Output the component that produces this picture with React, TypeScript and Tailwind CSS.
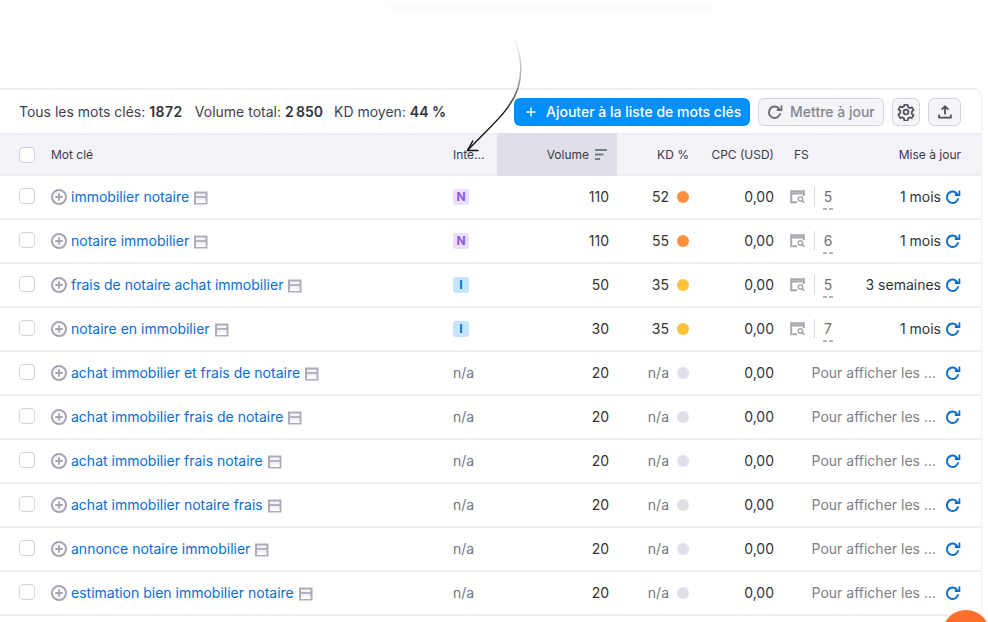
import React from "react";
import { Plus } from "lucide-react";

type Row = {
  keyword: string;
  intent?: "N" | "I";
  volume: number;
  kd?: number;
  fs?: number;
  updated?: string;
};

const rows: Row[] = [
  { keyword: "immobilier notaire", intent: "N", volume: 110, kd: 52, fs: 5, updated: "1 mois" },
  { keyword: "notaire immobilier", intent: "N", volume: 110, kd: 55, fs: 6, updated: "1 mois" },
  { keyword: "frais de notaire achat immobilier", intent: "I", volume: 50, kd: 35, fs: 5, updated: "3 semaines" },
  { keyword: "notaire en immobilier", intent: "I", volume: 30, kd: 35, fs: 7, updated: "1 mois" },
  { keyword: "achat immobilier et frais de notaire", volume: 20 },
  { keyword: "achat immobilier frais de notaire", volume: 20 },
  { keyword: "achat immobilier frais notaire", volume: 20 },
  { keyword: "achat immobilier notaire frais", volume: 20 },
  { keyword: "annonce notaire immobilier", volume: 20 },
  { keyword: "estimation bien immobilier notaire", volume: 20 },
];

const Checkbox = () => (
  <span className="block h-4 w-4 rounded-[4px] border border-[#d3d3da] bg-white" />
);

const AddIcon = () => (
  <svg width="16" height="16" viewBox="0 0 16 16" fill="none" className="shrink-0">
    <circle cx="8" cy="8" r="7" stroke="#a4a4b2" strokeWidth="2" />
    <path d="M8 4.2v7.6M4.2 8h7.6" stroke="#a4a4b2" strokeWidth="1.8" />
  </svg>
);

const SerpIcon = () => (
  <svg width="14" height="14" viewBox="0 0 14 14" fill="none" className="mt-px shrink-0">
    <rect x="1" y="1.5" width="11.5" height="11" fill="#f3f3f6" stroke="#adadba" strokeWidth="2" />
    <path d="M1 6h11.5" stroke="#adadba" strokeWidth="1.8" />
    <path d="M2 9.5h9.5V12H2z" fill="#ffffff" />
  </svg>
);

const SerpSearchIcon = () => (
  <svg width="16" height="14" viewBox="0 0 16 14" fill="none" className="shrink-0">
    <path d="M7 12.2H1.2V1.2h12.6V6" stroke="#a8a8b0" strokeWidth="2" />
    <path d="M1.2 3.4h12.6" stroke="#a8a8b0" strokeWidth="2.2" />
    <circle cx="10.5" cy="9" r="2.2" stroke="#a8a8b0" strokeWidth="1.5" />
    <path d="M12.2 10.7l2 2" stroke="#a8a8b0" strokeWidth="1.7" />
  </svg>
);

const RefreshIcon = ({ color }: { color: string }) => (
  <svg width="16" height="16" viewBox="0 0 16 16" fill="none" stroke={color} strokeWidth="2" className="shrink-0">
    <path d="M12.4 5.2A5.7 5.7 0 1 0 13.2 9.4" />
    <path d="M14.4 1.4V6H9.8" strokeWidth="1.8" />
  </svg>
);

const GearIcon = () => (
  <svg width="18" height="18" viewBox="0 0 24 24" fill="none" stroke="#55555f" strokeWidth="2.4" strokeLinejoin="round">
    <path d="M9.8 2.5h4.4l.6 3 2.1 1.2 2.9-1 2.2 3.8-2.3 2v2.9l2.3 2-2.2 3.8-2.9-1-2.1 1.2-.6 3H9.8l-.6-3-2.1-1.2-2.9 1L2 15.4l2.3-2v-2.9L2 8.5l2.2-3.8 2.9 1 2.1-1.2z" />
    <circle cx="12" cy="12" r="3.2" />
  </svg>
);

const UploadIcon = () => (
  <svg width="16" height="16" viewBox="0 0 16 16" fill="none" stroke="#4f4f58" strokeWidth="1.8">
    <path d="M8 10.5V2.6" />
    <path d="M4.6 5.6L8 2.2l3.4 3.4" />
    <path d="M2.2 10.6v3h11.6v-3" />
  </svg>
);

const SortIcon = () => (
  <svg width="12" height="11" viewBox="0 0 12 11" className="shrink-0">
    <path d="M0 0h12v2H0z" fill="#6f7f88" />
    <path d="M0 4.5h8.5v2H0z" fill="#6f7f88" />
    <path d="M0 9h5v2H0z" fill="#6f7f88" />
  </svg>
);

const dotColor = (kd?: number) => {
  if (!kd) return "bg-[#e0dfe8]";
  return kd >= 50 ? "bg-[#ff9040]" : "bg-[#ffc238]";
};

const KeywordRow = ({ row }: { row: Row }) => (
  <div className="flex h-11 items-center border-b-2 border-[#f0eff5] bg-white text-sm text-[#333339]">
    <div className="w-[51px] pl-[19px] pb-[2px]">
      <Checkbox />
    </div>
    <div className="flex w-[402px] items-center">
      <AddIcon />
      <span className="ml-1 text-[#0a6ecf]">{row.keyword}</span>
      <span className="ml-[5px]">
        <SerpIcon />
      </span>
    </div>
    <div className="w-[44px]">
      {row.intent === "N" && (
        <span className="flex h-4 w-4 items-center justify-center rounded-[3px] bg-[#eadffd] text-xs font-bold text-[#8c55ea]">N</span>
      )}
      {row.intent === "I" && (
        <span className="flex h-4 w-4 items-center justify-center rounded-[3px] bg-[#c4e5fb] text-xs font-bold text-[#0a6ecf]">I</span>
      )}
      {!row.intent && <span className="text-[#75757f]">n/a</span>}
    </div>
    <div className="w-[120px] pr-[8px] text-right">{row.volume}</div>
    <div className="flex w-[72px] items-center justify-end gap-2">
      <span className={row.kd ? "" : "text-[#75757f]"}>{row.kd ?? "n/a"}</span>
      <span className={`h-3 w-3 rounded-full ${dotColor(row.kd)}`} />
    </div>
    <div className="w-[85px] text-right">0,00</div>
    {row.updated ? (
      <>
        <div className="flex w-[65px] items-center pl-4">
          <SerpSearchIcon />
          <span className="ml-[8px] h-5 w-px shrink-0 bg-[#d9d9e0]" />
          <span className="ml-[8px] flex flex-col items-center pt-[3px] text-[#6f6f78]">
            {row.fs}
            <span className="mt-px flex gap-[2px]">
              <span className="h-[2px] w-[4px] bg-[#b5b5bf]" />
              <span className="h-[2px] w-[4px] bg-[#b5b5bf]" />
            </span>
          </span>
        </div>
        <div className="flex flex-1 items-center justify-end gap-1 pr-[20px]">
          <span>{row.updated}</span>
          <RefreshIcon color="#0a6ecf" />
        </div>
      </>
    ) : (
      <div className="flex flex-1 items-center justify-end gap-[9px] pr-[20px] text-[#7f7f88]">
        <span>Pour afficher les ...</span>
        <RefreshIcon color="#0a6ecf" />
      </div>
    )}
  </div>
);

export default function App() {
  return (
    <div className="relative h-[622px] w-[988px] overflow-hidden bg-white font-['Inter',sans-serif]">
      <div className="h-[88px]" />
      <div className="w-[982px] rounded-tr-lg border-t-2 border-r border-[#f0eff5]">
        {/* summary bar */}
        <div className="flex h-[43px] items-center pl-[19px] pr-[20px] text-sm text-[#44444c]">
          <span>
            Tous les mots clés: <b className="font-semibold tracking-[0.5px] text-[#333339]">1872</b>
          </span>
          <span className="ml-3">
            Volume total: <b className="font-semibold text-[#333339]">2{"\u2009"}850</b>
          </span>
          <span className="ml-[11px]">
            KD moyen: <b className="font-semibold text-[#333339]">44 %</b>
          </span>
          <button className="ml-auto flex h-7 w-[236px] items-center rounded-md bg-[#008ffe] pl-[10px] text-sm font-medium text-white">
            <Plus size={14} strokeWidth={2.4} />
            <span className="ml-2">Ajouter à la liste de mots clés</span>
          </button>
          <button className="ml-2 flex h-7 w-[126px] items-center rounded-md border border-[#d4d4da] bg-[#f5f4f9] pl-2 text-sm font-medium text-[#85858e]">
            <RefreshIcon color="#6d6d76" />
            <span className="ml-[7px]">Mettre à jour</span>
          </button>
          <button className="ml-2 flex h-7 w-7 items-center justify-center rounded-md border border-[#d4d4da] bg-[#f5f4f9]">
            <GearIcon />
          </button>
          <button className="ml-2 flex h-7 w-[33px] items-center justify-center rounded-md border border-[#d4d4da] bg-[#f5f4f9]">
            <UploadIcon />
          </button>
        </div>

        {/* column headers */}
        <div className="flex h-[43px] items-center border-y-2 border-[#eeedf3] bg-[#f4f3f9] text-xs text-[#3a3a42]">
          <div className="w-[51px] pl-[19px]">
            <Checkbox />
          </div>
          <div className="w-[402px]">Mot clé</div>
          <div className="w-[44px]">Inte...</div>
          <div className="flex h-[43px] w-[120px] items-center justify-end gap-[6px] bg-[#e0dfe8] pr-[10px]">
            <span>Volume</span>
            <SortIcon />
          </div>
          <div className="w-[72px] text-right">KD %</div>
          <div className="w-[85px] text-right">CPC (USD)</div>
          <div className="w-[65px] pl-5">FS</div>
          <div className="flex-1 pr-[20px] text-right">Mise à jour</div>
        </div>

        {rows.map((row) => (
          <KeywordRow key={row.keyword} row={row} />
        ))}
      </div>

      {/* hand-drawn arrow over the table */}
      <svg width="988" height="160" viewBox="0 0 988 160" fill="none" className="pointer-events-none absolute left-0 top-0">
        <defs>
          <linearGradient id="fade" x1="0" y1="36" x2="0" y2="115" gradientUnits="userSpaceOnUse">
            <stop offset="0" stopColor="#ffffff" />
            <stop offset="0.5" stopColor="#b0b0b0" />
            <stop offset="1" stopColor="#111111" />
          </linearGradient>
        </defs>
        <path d="M510 28C520 50 524 68 518 88C510 112 488 128 468 150" stroke="url(#fade)" strokeWidth="1.4" />
        <path d="M473 140.5L467.5 150.5H478.5" stroke="#111111" strokeWidth="1.5" />
      </svg>

      {/* faded text remnant at the top */}
      <div className="absolute left-[390px] top-[3px] h-[9px] w-[320px] bg-[#fbfbfb] blur-[2px]" />

      {/* chat bubble corner */}
      <div className="absolute left-[942px] top-[610px] h-12 w-12 rounded-full bg-[#ff6f2c]" />
    </div>
  );
}
